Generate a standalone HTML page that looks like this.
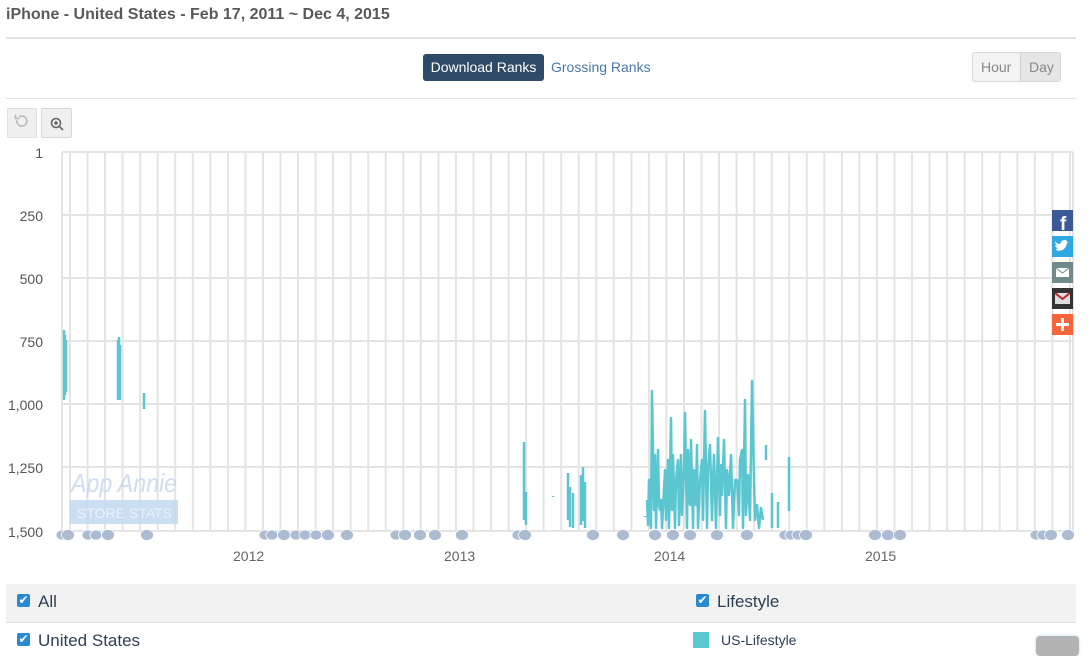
<!DOCTYPE html>
<html><head><meta charset="utf-8"><style>
body{margin:0;width:1088px;height:648px;overflow:hidden;background:#fff;font-family:"Liberation Sans",sans-serif;position:relative}
.a{position:absolute}
</style></head><body>
<div class="a" style="left:6px;top:6px;font-size:16px;font-weight:bold;color:#595959">iPhone - United States - Feb 17, 2011 ~ Dec 4, 2015</div>
<div class="a" style="left:6px;top:37px;width:1070px;height:2px;background:#e2e2e2"></div>
<div class="a" style="left:423px;top:54px;width:121px;height:27px;background:#2d4a66;border-radius:3px;color:#fff;font-size:14px;line-height:27px;text-align:center">Download Ranks</div>
<div class="a" style="left:551px;top:54px;line-height:27px;font-size:14px;color:#4a79a8">Grossing Ranks</div>
<div class="a" style="left:972px;top:52px;width:89px;height:30px;border:1px solid #d6d6d6;border-radius:3px;background:#f4f4f4;box-sizing:border-box"></div>
<div class="a" style="left:1020px;top:53px;width:40px;height:28px;background:#e6e6e6"></div>
<div class="a" style="left:1020px;top:53px;width:1px;height:28px;background:#d0d0d0"></div>
<div class="a" style="left:981px;top:59px;font-size:14px;color:#888">Hour</div>
<div class="a" style="left:1029px;top:59px;font-size:14px;color:#888">Day</div>
<div class="a" style="left:6px;top:98px;width:1070px;height:1px;background:#e2e2e2"></div>
<div class="a" style="left:7px;top:108px;width:30px;height:30px;background:#f0f0f0;border:1px solid #e0e0e0;box-sizing:border-box;border-radius:2px"></div>
<div class="a" style="left:41px;top:108px;width:31px;height:30px;background:#f0f0f0;border:1px solid #d8d8d8;box-sizing:border-box;border-radius:2px"></div>
<svg class="a" style="left:0;top:0" width="1088" height="648">
<path d="M17 120a5 5 0 1 0 2-3" fill="none" stroke="#bbb" stroke-width="1.6"/><path d="M15.5 114.5v4h4" fill="none" stroke="#bbb" stroke-width="1.6"/>
<circle cx="56" cy="123" r="4.5" fill="none" stroke="#666" stroke-width="1.6"/><path d="M59 126l4 4M56 121v4M54 123h4" stroke="#666" stroke-width="1.6"/>
<g stroke="#e4e4e4" stroke-width="2">
<path d="M62 152h1011M62 215h1011M62 278h1011M62 341h1011M62 404h1011M62 467h1011M62 531h1011M62 152v379M1073 152v379"/>
<path d="M70 152v379M87.5 152v379M105 152v379M122.6 152v379M140.2 152v379M157.7 152v379M175.2 152v379M192.8 152v379M210.3 152v379M227.9 152v379M245.4 152v379M263 152v379M280.5 152v379M298 152v379M315.6 152v379M333.1 152v379M350.7 152v379M368.2 152v379M385.7 152v379M403.3 152v379M420.8 152v379M438.4 152v379M455.9 152v379M473.5 152v379M491 152v379M508.6 152v379M526.1 152v379M543.6 152v379M561.2 152v379M578.7 152v379M596.3 152v379M613.8 152v379M631.4 152v379M648.9 152v379M666.4 152v379M684 152v379M701.5 152v379M719 152v379M736.6 152v379M754.2 152v379M771.7 152v379M789.2 152v379M806.8 152v379M824.3 152v379M841.9 152v379M859.4 152v379M877 152v379M894.5 152v379M912 152v379M929.6 152v379M947.1 152v379M964.7 152v379M982.2 152v379M999.8 152v379M1017.3 152v379M1034.8 152v379M1052.4 152v379M1069.9 152v379"/>
</g>
<g opacity="0.85"><text x="71" y="492" font-size="26" font-style="italic" fill="#c6d8ee" textLength="106" lengthAdjust="spacingAndGlyphs">App Annie</text>
<rect x="70" y="500" width="108" height="24" fill="#c4d9f1"/><text x="77" y="518" font-size="14" fill="#e8f0fa">STORE STATS</text></g>
<g fill="none" stroke="#5bc6d0" stroke-width="2.5" stroke-linejoin="round">
<path d="M64 400V330M65 395V335M66 392V340"/>
<path d="M118 400V340M119 398V337M120 400V345"/>
<path d="M144 409V393"/>
<path d="M524 520V442M526 525V492"/>
<path d="M568 520V473M570 527V487M573 528V493M581 525V475M583 521V467M585 528V482"/>
<path d="M647 500L648 525L649 480L651 528L652 391L654 510L655 455L656 528L658 450L659 505L660 510L661 500L662 528L665 470L666 520L668 460L669 528L671 418L672 510L673 455L675 528L676 480L678 460L679 525L681 455L682 515L684 470L685 413L687 528L688 450L690 505L691 440L693 528L694 470L696 505L697 445L698 528L700 480L702 460L703 520L705 411L707 528L708 470L710 445L712 520L713 480L714 455L716 528L718 438L720 515L721 465L722 495L724 440L726 528L727 470L729 495L731 455L733 528L735 480L737 480L739 515L740 460L742 450L743 528L745 400L746 515L748 475L750 520L752 381L754 480L755 520L757 505L759 528L761 508L763 520"/>
<path d="M766 460V445M772 528V493M778 528V502M789 511V457"/>
<path d="M553 496v1M645 517v-1"/>
</g>
<g fill="#aabbd2" stroke="#fff" stroke-width="0.8" id="bub">
<ellipse cx="62" cy="535" rx="6" ry="5"/><ellipse cx="68" cy="535" rx="6.5" ry="5.5"/><ellipse cx="88" cy="535" rx="6" ry="5"/><ellipse cx="96" cy="535" rx="6" ry="5"/><ellipse cx="108" cy="535" rx="6.5" ry="5.5"/><ellipse cx="147" cy="535" rx="6.5" ry="5.5"/>
<ellipse cx="265" cy="535" rx="6" ry="5"/><ellipse cx="272" cy="535" rx="6" ry="5"/><ellipse cx="284" cy="535" rx="6.5" ry="5.5"/><ellipse cx="296" cy="535" rx="6" ry="5"/><ellipse cx="305" cy="535" rx="6" ry="5"/><ellipse cx="316" cy="535" rx="6" ry="5"/><ellipse cx="328" cy="535" rx="6.5" ry="5.5"/><ellipse cx="347" cy="535" rx="6.5" ry="5.5"/>
<ellipse cx="396" cy="535" rx="6" ry="5"/><ellipse cx="405" cy="535" rx="6.5" ry="5.5"/><ellipse cx="420" cy="535" rx="6.5" ry="5.5"/><ellipse cx="435" cy="535" rx="6.5" ry="5.5"/><ellipse cx="462" cy="535" rx="6.5" ry="5.5"/>
<ellipse cx="518" cy="535" rx="6" ry="5"/><ellipse cx="525" cy="535" rx="6.5" ry="5.5"/><ellipse cx="593" cy="535" rx="6.5" ry="5.5"/><ellipse cx="623" cy="535" rx="6.5" ry="5.5"/>
<ellipse cx="655" cy="535" rx="6.5" ry="5.5"/><ellipse cx="673" cy="535" rx="6.5" ry="5.5"/><ellipse cx="690" cy="535" rx="6.5" ry="5.5"/><ellipse cx="717" cy="535" rx="6.5" ry="5.5"/><ellipse cx="747" cy="535" rx="6.5" ry="5.5"/>
<ellipse cx="785" cy="535" rx="6" ry="5"/><ellipse cx="791" cy="535" rx="6" ry="5"/><ellipse cx="798" cy="535" rx="6" ry="5"/><ellipse cx="806" cy="535" rx="6.5" ry="5.5"/>
<ellipse cx="875" cy="535" rx="6.5" ry="5.5"/><ellipse cx="888" cy="535" rx="6.5" ry="5.5"/><ellipse cx="900" cy="535" rx="6.5" ry="5.5"/>
<ellipse cx="1036" cy="535" rx="6" ry="5"/><ellipse cx="1043" cy="535" rx="6" ry="5"/><ellipse cx="1051" cy="535" rx="6.5" ry="5.5"/><ellipse cx="1068" cy="535" rx="6.5" ry="5.5"/>
</g>
<rect x="1052" y="210" width="21" height="21" fill="#3b5998"/><text x="1060" y="230" font-size="19" font-weight="bold" fill="#fff">f</text>
<rect x="1052" y="236" width="21" height="21" fill="#2fa9e0"/><path d="M1056 250c4 2 10 0 11-7l2-1-2 0c0-2-3-3-5-1-2 1-1 3-2 3-2 0-4-1-5-3 0 2 1 4 2 4-1 1-2 0-2 0 0 2 2 3 3 3-1 1-2 1-2 1z" fill="#fff"/>
<rect x="1052" y="262" width="21" height="21" fill="#738a8d"/><rect x="1056" y="268" width="13" height="9" fill="#fff"/><path d="M1056 268l6.5 5 6.5-5" fill="none" stroke="#738a8d"/>
<rect x="1052" y="288" width="21" height="21" fill="#333"/><rect x="1055" y="293" width="15" height="11" fill="#ddd"/><path d="M1055 293l7.5 6 7.5-6" fill="none" stroke="#c4222a" stroke-width="2"/>
<rect x="1052" y="314" width="21" height="21" fill="#f9653b"/><path d="M1062.5 318v13M1056 324.5h13" stroke="#fff" stroke-width="3"/>
</svg>
<div class="a" style="font-size:14px;color:#555;text-align:right;width:43px;left:0;top:144px;line-height:18px">1</div>
<div class="a" style="font-size:14px;color:#555;text-align:right;width:43px;left:0;top:207px;line-height:18px">250</div>
<div class="a" style="font-size:14px;color:#555;text-align:right;width:43px;left:0;top:270px;line-height:18px">500</div>
<div class="a" style="font-size:14px;color:#555;text-align:right;width:43px;left:0;top:333px;line-height:18px">750</div>
<div class="a" style="font-size:14px;color:#555;text-align:right;width:43px;left:0;top:396px;line-height:18px">1,000</div>
<div class="a" style="font-size:14px;color:#555;text-align:right;width:43px;left:0;top:459px;line-height:18px">1,250</div>
<div class="a" style="font-size:14px;color:#555;text-align:right;width:43px;left:0;top:523px;line-height:18px">1,500</div>
<div class="a" style="font-size:14px;color:#666;left:233px;top:548px">2012</div>
<div class="a" style="font-size:14px;color:#666;left:444px;top:548px">2013</div>
<div class="a" style="font-size:14px;color:#666;left:654px;top:548px">2014</div>
<div class="a" style="font-size:14px;color:#666;left:865px;top:548px">2015</div>
<div class="a" style="left:6px;top:584px;width:1070px;height:38px;background:#f2f2f2;border-bottom:1px solid #ddd"></div>
<div class="a" style="left:17px;top:594px;width:13px;height:13px;background:#2a8ad1;border-radius:2px;color:#fff;font-size:12px;line-height:13px;text-align:center">✔</div>
<div class="a" style="left:38px;top:592px;font-size:17px;color:#2d3f55">All</div>
<div class="a" style="left:696px;top:594px;width:13px;height:13px;background:#2a8ad1;border-radius:2px;color:#fff;font-size:12px;line-height:13px;text-align:center">✔</div>
<div class="a" style="left:717px;top:592px;font-size:17px;color:#2d3f55">Lifestyle</div>
<div class="a" style="left:17px;top:633px;width:13px;height:13px;background:#2a8ad1;border-radius:2px;color:#fff;font-size:12px;line-height:13px;text-align:center">✔</div>
<div class="a" style="left:38px;top:631px;font-size:17px;color:#2d3f55">United States</div>
<div class="a" style="left:693px;top:632px;width:16px;height:16px;background:#5bc8d2"></div>
<div class="a" style="left:721px;top:632px;font-size:14px;color:#2d3f55">US-Lifestyle</div>
<div class="a" style="left:1036px;top:636px;width:43px;height:20px;background:#b3b3b3;border-radius:4px;box-shadow:0 0 3px #bde"></div>
</body></html>
